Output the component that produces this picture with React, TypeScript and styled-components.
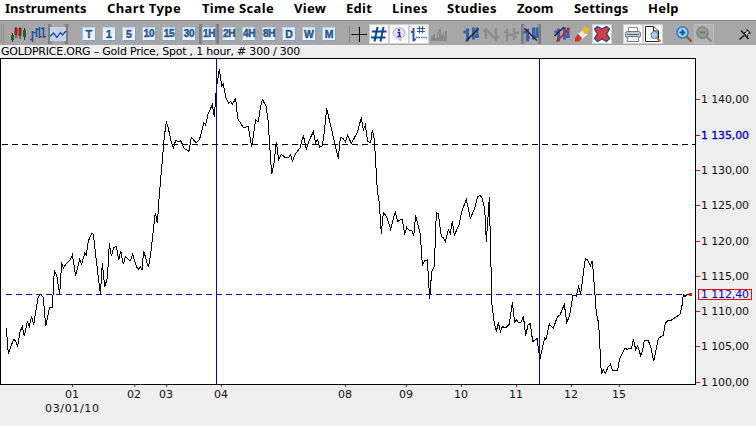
import React from "react";
import styled, { createGlobalStyle } from "styled-components";

const GlobalStyle = createGlobalStyle`
  body { margin: 0; background: #eee; overflow: hidden; }
  * { box-sizing: border-box; }
`;

const Window = styled.div`
  width: 756px;
  height: 426px;
  display: flex;
  flex-direction: column;
  background: #eee;
  color: #000;
  font-family: "DejaVu Sans", sans-serif;
`;

const MenuBar = styled.nav`
  display: flex;
  height: 20px;
  padding-left: 5px;
  background: #fff;
`;

const MenuItem = styled.span<{ $w: number; $track: number }>`
  flex: 0 0 ${(p) => p.$w}px;
  font: bold 13px/16px "Noto Sans", sans-serif;
  letter-spacing: ${(p) => p.$track}px;
  white-space: nowrap;
`;

const Toolbar = styled.div`
  display: flex;
  align-items: center;
  height: 25px;
  padding: 1px 0 0 1px;
  border-top: 1px solid #7c847c;
  background: #a7a7a7;
`;

const Grip = styled.div`
  width: 3px;
  height: 19px;
  border-left: 1px solid #8e8e8e;
  border-right: 1px solid #8e8e8e;
`;

const Group = styled.div<{ $gap: number }>`
  display: flex;
  margin-left: ${(p) => p.$gap}px;
`;

const Tool = styled.div<{ $look?: "raised" | "pressed" | "off" }>`
  display: flex;
  width: 20px;
  height: 20px;
  align-items: center;
  justify-content: center;
  background: ${(p) =>
    p.$look === "raised"
      ? "linear-gradient(#f4f4f4,#fff) padding-box"
      : p.$look === "pressed"
      ? "linear-gradient(90deg,#777,#a7a7a7 20%,#a7a7a7 80%,#777)"
      : p.$look === "off"
      ? "#b2b2b2"
      : "none"};
  border: 1px solid
    ${(p) => (p.$look === "raised" ? "#d0d0d0" : p.$look === "off" ? "#bcbcbc" : "transparent")};
  svg { flex: none; display: block; }
`;

const Period = styled.span<{ $narrow: boolean }>`
  display: flex;
  flex: none;
  width: 14px;
  height: 14px;
  align-items: center;
  justify-content: center;
  border: 1px solid;
  border-color: #b8d4f4 #7ea2d0 #7ea2d0 #a4c4ec;
  background: linear-gradient(#e2eefb, #f2f6fb);
  color: #315a8c;
  font: bold ${(p) => (p.$narrow ? 10 : 10.5)}px/12px "Liberation Sans", sans-serif;
  letter-spacing: ${(p) => (p.$narrow ? -0.3 : 0)}px;
  -webkit-text-stroke: 0.5px #315a8c;
`;

const Caption = styled.div`
  height: 13px;
  padding-left: 1px;
  font: 11px/13px "DejaVu Sans", sans-serif;
  letter-spacing: -0.22px;
  white-space: nowrap;
`;

const Chart = styled.svg`
  display: block;
  width: 756px;
  height: 368px;
  flex: none;
`;

const menus: [string, number, number][] = [
  ["Instruments", 102, 0.05],
  ["Chart Type", 95, 0.4],
  ["Time Scale", 92, 0.35],
  ["View", 52, 0.3],
  ["Edit", 46, 0.3],
  ["Lines", 55, 0.4],
  ["Studies", 70, 0.3],
  ["Zoom", 57, 0],
  ["Settings", 74, 0.15],
  ["Help", 50, 0.25],
];

const periods = ["T", "1", "5", "10", "15", "30", "1H", "2H", "4H", "8H", "D", "W", "M"];

const Icon = ({ children }: { children: React.ReactNode }) => (
  <svg width="20" height="20" viewBox="0 0 20 20" fill="none">{children}</svg>
);

const CandleIcon = () => (
  <Icon>
    <path d="M4.500 9V18M8 3V14M12 3V15M16.500 4V16" stroke="#333" />
    <path d="M3 11h3v5H3zM15 6h3v7h-3z" fill="#176a20" />
    <path d="M6.500 4h3v7h-3zM10.500 4h3v8h-3z" fill="#a51824" />
  </Icon>
);
const OhlcIcon = () => (
  <Icon>
    <path d="M4.500 7V18M2 15.500H4.500M4.500 8.500H8M8.500 4V13M8.500 5.500H11.500M11.500 3V14M11.500 12.500H14M15.500 3V14M13 4.500H15.500M15.500 12.500H18" stroke="#2452a5" strokeWidth="1.600" />
  </Icon>
);
const LineIcon = () => (
  <Icon>
    <path d="M2 3H18V17H2Z" fill="#c4d5eb" />
    <path d="M2 12.500L5.500 9L9 13.500L12.500 8.500L14.500 11L18 7" stroke="#194e99" strokeWidth="1.300" />
  </Icon>
);
const CrossIcon = () => (
  <Icon>
    <path d="M.5 2V19" stroke="#888" />
    <path d="M2.500 10.500H18M10.500 3V18" stroke="#000" />
  </Icon>
);
const HashIcon = () => (
  <Icon><path d="M8.500 3L5.500 17.500M14.500 3L11.500 17.500M3 7.500H17.500M2 13.500H16.500" stroke="#07469b" strokeWidth="2" /></Icon>
);
const InfoIcon = () => (
  <Icon>
    <path d="M10 4C13.500 4 16 6 16 9C16 12 14 13 12 14L11.500 17L9 14C6 13 4 11.500 4 9C4 6 7 4 10 4Z" fill="#e3e3f4" stroke="#aaa" />
    <path d="M10 5V7M8.500 8.500H10.500V13M8.500 12.500H12" stroke="#221dd0" strokeWidth="1.600" />
  </Icon>
);
const GridBarsIcon = () => (
  <Icon>
    <path d="M4.500 4V17.500M2 8H4M4 15.500H7" stroke="#2856a0" strokeWidth="2" />
    <path d="M10.500 2V9.500M13.500 2V9.500M8 4.500H16M8 7.500H16" stroke="#2856a0" />
    <path d="M7 13.500H18" stroke="#4170b1" strokeWidth="1.600" strokeDasharray="1.600 .8" />
  </Icon>
);
const VolumeIcon = () => (
  <Icon><path d="M2 17V12H4V10H6V14H8V8H9V13H10V5H12V11H14V9H15V12H16V7H18V17Z" fill="#888" /></Icon>
);
const SlashBars = ({ stroke = "#222", back = false, two = false }: { stroke?: string; back?: boolean; two?: boolean }) => (
  <Icon>
    <path d="M6.500 4.500V17.500M2.500 8H6M12.500 3.500V15.500M16 3.500V14" stroke="#3b60ae" strokeWidth="3" />
    <path d="M6 13.500H9M12 12.500H18" stroke="#3b60ae" strokeWidth="2.500" />
    {two && <path d="M2.500 12L12 3" stroke="#222" strokeWidth="1.300" />}
    <path d={back ? "M3.500 4.500L16 16.500" : two ? "M4.500 17.500L17.500 4.500" : "M5 17L17.500 4.500"} stroke={stroke} strokeWidth={two ? 1.7 : 1.3} />
  </Icon>
);
const GreyBars = ({ diagonal }: { diagonal?: boolean }) => (
  <Icon>
    <path d={diagonal ? "M5 4V15M5 5L15 16M15 4V17M2 7H5M15 13H18" : "M6 5V17M13 4V16M3 8H6M6 11H13M13 9H18M13 13H16"} stroke="#8c8c8c" strokeWidth="2.300" />
  </Icon>
);
const PencilIcon = () => (
  <Icon>
    <path d="M6 10L11 6L16 10L10 15Z" fill="#ececec" />
    <path d="M10 7L11 5L12 2L16 4L17 7L16 10L13 10Z" fill="#f2b52e" />
    <path d="M3 14L6 10L10 14L7 17.500H3Z" fill="#d63229" />
  </Icon>
);
const DeleteIcon = () => (
  <Icon>
    <path d="M2.500 5L5.500 2.500L10 5L14.500 2.500L17.500 5L14.500 10L17.500 14.500L14.500 17.500L10 15L5.500 17.500L2.500 14.500L5.500 10Z" fill="#dc3b42" stroke="#204a87" strokeWidth="1.400" strokeLinejoin="round" />
  </Icon>
);
const PrintIcon = () => (
  <Icon>
    <path d="M5.500 8V3.500H14.500V8" fill="#fff" stroke="#888" />
    <rect x="2.500" y="7.500" width="15" height="6" rx="2" fill="#bccdd3" stroke="#60757e" />
    <path d="M5 12.500H15L16 17.500H4Z" fill="#f5f7f8" stroke="#777" />
    <path d="M4 10.500H16" stroke="#52656c" />
  </Icon>
);
const PreviewIcon = () => (
  <Icon>
    <path d="M2.500 2.500H10.500L15.500 7V17.500H2.500Z" fill="#fff" stroke="#222" />
    <path d="M10.500 3V7H15.500" fill="#eee" stroke="#222" />
    <circle cx="11.500" cy="11" r="3.500" fill="#a9ceee" stroke="#3678b4" />
    <path d="M14 14L17.500 17.500" stroke="#a8683a" strokeWidth="2" />
  </Icon>
);
const ZoomIcon = ({ off = false }: { off?: boolean }) => (
  <Icon>
    <path d="M12 12L17.500 17.500" stroke={off ? "#888" : "#985426"} strokeWidth="2.200" />
    <circle cx="8.500" cy="8.500" r="5.500" fill={off ? "#999" : "#a9d5fc"} stroke={off ? "#858585" : "#317dc6"} strokeWidth="1.600" />
    <path d={off ? "M5.500 8.500H11.500" : "M5.500 8.500H11.500M8.500 5.500V11.500"} stroke={off ? "#777" : "#075895"} strokeWidth="2" />
  </Icon>
);
const PinIcon = () => (
  <Icon>
    <path d="M4.500 15.500L9 11.500M6 6.500L13.500 15M11.500 5.500L15.500 9.500" stroke="#111" strokeWidth="1.400" />
    <path d="M8.500 8.500H11L13 6.500L14.500 8L12.500 10.500V13Z" fill="#ddd" stroke="#222" />
  </Icon>
);

// Price path in thirds of a pixel, split into spans that each carry their own origin.
const spans = [
  { x: 0, y: 225, points: "19,310 25,388 33,363 41,344 46,346 53,364 60,320 67,305 73,334 82,290 88,304 95,274 101,301 108,255 115,215 122,208 130,218 137,304 149,247 157,247 163,136 171,155 179,210 185,112 190,130 198,116 210,106 217,90 227,152 239,103 245,118 254,85 259,90 265,48 275,25 280,28 290,115 301,207 307,115 314,185 322,160 328,55 334,94 341,68 349,64 356,106 362,77 370,118 376,94 390,107" },
  { x: 125, y: 60, points: "15,604 23,583 35,622 41,628 46,620 51,629 56,572 70,622 76,590 91,458 97,490 103,405 118,230 124,184 130,205 138,242 145,265 152,241 160,245 167,242 178,266 192,274 199,232 213,248 223,240 230,215 236,188 242,195 249,162 262,134 268,172 272,112 275,78 283,28 290,78 295,72 303,115 311,130 317,125 322,134 332,115 338,176 345,187" },
  { x: 240, y: 60, points: "0,187 10,202 25,200 35,262 47,180 55,185 60,150 67,118 78,138 84,180 95,343 102,310 109,245 116,299 124,283 136,293 146,292 152,283 157,304 165,284 180,264 190,226 199,268 206,245 220,215 227,248 233,238 239,262 247,258 253,215 260,145 295,296 301,232 309,235 316,245 323,226 334,250 353,215 364,172 370,210 376,195 383,245" },
  { x: 365, y: 110, points: "8,95 17,98 22,60 28,90 37,240 43,280 49,371 55,307 65,320 77,358 85,325 91,308 98,335 105,330 112,328 119,374 125,352 133,362 140,360 146,379 152,316 160,350 166,372 172,466 179,452 187,450 194,566 200,485 208,470 214,307 220,312 229,380 235,382 241,395 250,358 256,370 262,334 268,376 283,342 290,305 304,268 316,325 329,295 338,260 346,256" },
  { x: 480, y: 185, points: "0,31 5,36 14,70 19,170 28,36 33,245 36,360 43,415 49,440 55,412 61,440 67,425 77,428 88,418 97,352 104,412 110,404 116,413 125,410 130,392 137,452 144,420 151,415 158,470 172,460 176,502 181,517 194,458 198,463 208,417 220,430 232,395 240,390 253,358 260,412 268,395 279,330 289,333 296,305 302,327 310,265 316,220 323,225 331,243 337,227 342,290 349,385 356,415 364,568" },
  { x: 590, y: 270, points: "34,313 40,298 46,310 54,292 61,283 67,300 83,300 89,265 104,235 112,238 125,234 130,208 137,238 143,227 152,257 158,240 163,212 174,210 182,230 191,274 199,235 205,205 220,196 226,160 233,152 245,150 269,134 275,115 280,73 285,79 292,73 302,73" },
];

const prices: [string, number][] = [
  ["1 140,00", 99], ["1 135,00", 135], ["1 130,00", 170], ["1 125,00", 205],
  ["1 120,00", 241], ["1 115,00", 276], ["1 110,00", 311], ["1 105,00", 346], ["1 100,00", 382],
];

const days: [string, number][] = [
  ["01", 72], ["02", 134], ["03", 166], ["04", 221], ["08", 345],
  ["09", 406], ["10", 461], ["11", 516], ["12", 571], ["15", 619],
];

const PriceChart = () => (
  <Chart viewBox="0 58 756 368" fontFamily="DejaVu Sans, sans-serif" fontSize="11">
    <rect x="0.5" y="58.5" width="695" height="326" fill="#fff" stroke="#000" shapeRendering="crispEdges" />
    <g shapeRendering="crispEdges" fill="none">
      <path d="M2 144.500H695" stroke="#000" strokeDasharray="6 4" />
      <path d="M6 294.500H695" stroke="#0000d8" strokeDasharray="6 4" />
      {spans.map((s) => (
        <g key={s.x} transform={`translate(${s.x} ${s.y}) scale(${1 / 3})`}>
          <polyline points={s.points} stroke="#000" strokeWidth="3" />
        </g>
      ))}
      <path d="M216.500 59V384" stroke="#0000d8" />
      <path d="M539.500 59V384" stroke="#0000c8" />
      {prices.map(([, y]) => <path key={y} d={`M696 ${y + 0.5}h4`} stroke="#f00" />)}
      {days.map(([, x]) => <path key={x} d={`M${x + 0.5} 385v2`} stroke="#f00" />)}
      <rect x="698.500" y="289.500" width="53" height="10" stroke="#f00" />
      <rect x="689" y="293" width="3" height="3" fill="#f00" />
    </g>
    {prices.map(([label, y]) => (
      <text key={label} x="701" y={y + 4} textLength="48" fill={y === 135 ? "#0000d0" : "#111"} stroke={y === 135 ? "#0000d0" : "none"} strokeWidth="0.3">{label}</text>
    ))}
    <text x="701" y="298" textLength="48" fill="#0000e0">1 112,40</text>
    {days.map(([label, x]) => (
      <text key={label} x={x} y="398" textAnchor="middle" fill="#111">{label}</text>
    ))}
    <text x="45" y="412" textLength="54" fill="#111">03/01/10</text>
  </Chart>
);

export default function App() {
  return (
    <Window>
      <GlobalStyle />
      <MenuBar>
        {menus.map(([name, w, track]) => <MenuItem key={name} $w={w} $track={track}>{name}</MenuItem>)}
      </MenuBar>
      <Toolbar>
        <Grip />
        <Group $gap={4}>
          <Tool><CandleIcon /></Tool>
          <Tool><OhlcIcon /></Tool>
          <Tool $look="pressed"><LineIcon /></Tool>
        </Group>
        <Group $gap={11}>
          {periods.map((p) => (
            <Tool key={p} $look={p === "1H" ? "pressed" : undefined}>
              <Period $narrow={p.length > 1}>{p}</Period>
            </Tool>
          ))}
        </Group>
        <Group $gap={10}>
          <Tool><CrossIcon /></Tool>
          <Tool $look="raised"><HashIcon /></Tool>
          <Tool $look="raised"><InfoIcon /></Tool>
          <Tool $look="raised"><GridBarsIcon /></Tool>
          <Tool><VolumeIcon /></Tool>
        </Group>
        <Group $gap={12}>
          <Tool><SlashBars /></Tool>
          <Tool><GreyBars diagonal /></Tool>
          <Tool><GreyBars /></Tool>
          <Tool $look="pressed"><SlashBars back /></Tool>
        </Group>
        <Group $gap={11}>
          <Tool><SlashBars stroke="#df1822" two /></Tool>
          <Tool><PencilIcon /></Tool>
          <Tool $look="raised"><DeleteIcon /></Tool>
        </Group>
        <Group $gap={11}>
          <Tool $look="raised"><PrintIcon /></Tool>
          <Tool $look="raised"><PreviewIcon /></Tool>
        </Group>
        <Group $gap={11}>
          <Tool><ZoomIcon /></Tool>
          <Tool $look="off"><ZoomIcon off /></Tool>
        </Group>
        <Group $gap={21}>
          <Tool><PinIcon /></Tool>
        </Group>
      </Toolbar>
      <Caption>GOLDPRICE.ORG – Gold Price, Spot , 1 hour, # 300 / 300</Caption>
      <PriceChart />
    </Window>
  );
}
